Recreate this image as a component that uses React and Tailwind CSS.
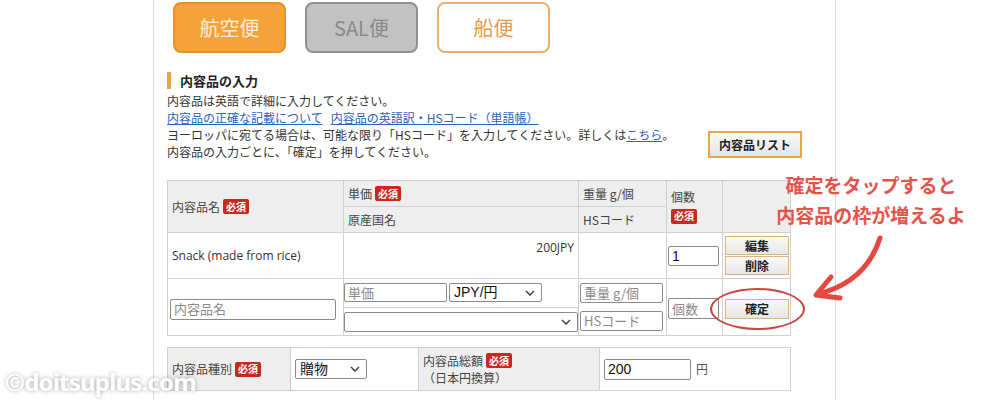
import React from 'react';

const JP = { fontFamily: '"Noto Sans CJK JP", "Noto Sans", sans-serif' };
const ARIAL = { fontFamily: '"Liberation Sans", "Noto Sans CJK JP", sans-serif' };
const OPEN = { fontFamily: '"Open Sans", "Noto Sans", sans-serif' };

const Badge = () => (
  <span className="inline-flex items-center justify-center bg-[#c8281e] text-white text-[10px] font-bold leading-none px-[3px] h-[15px] rounded-[2px] ml-[3px]">
    必須
  </span>
);

const Chevron = () => (
  <svg width="10" height="6" viewBox="0 0 10 6" className="shrink-0">
    <path d="M1 1 L5 5 L9 1" fill="none" stroke="#333" strokeWidth="1.3" />
  </svg>
);

const Field = ({ className = '', children, placeholder }) => (
  <div className={`flex items-center bg-white border border-[#8a8a8a] rounded-[2px] px-[3px] ${className}`}>
    {children ? (
      <span className="text-[14px] text-[#111]" style={ARIAL}>{children}</span>
    ) : (
      <span className="text-[13px] text-[#8a8a8a]">{placeholder}</span>
    )}
  </div>
);

const Select = ({ className = '', value }) => (
  <div className={`flex items-center justify-between bg-white border border-[#8a8a8a] rounded-[2px] pl-[4px] pr-[6px] ${className}`}>
    <span className="text-[14px] text-[#111]" style={ARIAL}>{value}</span>
    <Chevron />
  </div>
);

const SmallBtn = ({ label, className = '' }) => (
  <div className={`flex items-center justify-center bg-gradient-to-b from-[#fafafa] to-[#e6e6e6] border border-[#e2b27e] text-[12px] text-[#222] font-bold ${className}`}>
    {label}
  </div>
);

export default function App() {
  const th = 'bg-[#eeeeee] border border-[#cfcfcf] text-[12px] text-[#444] font-normal text-left align-middle px-[4px]';
  const cell = 'border border-[#cfcfcf] bg-white text-[12px] text-[#333]';

  return (
    <div className="relative w-[1000px] h-[400px] bg-white overflow-hidden" style={JP}>
      <div className="ml-[153px] w-[683px] h-full border-l border-r border-[#dcdcdc] pl-[13px]">
        {/* shipping method buttons */}
        <div className="flex gap-[19px] pl-[6px] pt-[2px]">
          <div className="w-[113px] h-[51px] rounded-[8px] bg-[#f6a23a] border-2 border-[#e8902a] flex items-center justify-center text-[20px] text-[#fdecd6]">
            航空便
          </div>
          <div className="w-[113px] h-[51px] rounded-[8px] bg-[#c2c2c2] border-2 border-[#8f8f8f] flex items-center justify-center text-[20px] text-[#8a8a8a]">
            SAL便
          </div>
          <div className="w-[113px] h-[51px] rounded-[8px] bg-white border-2 border-[#eab070] flex items-center justify-center text-[20px] text-[#e49a4c]">
            船便
          </div>
        </div>

        {/* heading */}
        <div className="flex items-center mt-[19px] h-[17px]">
          <div className="w-[4px] h-[17px] bg-[#f0a240]" />
          <span className="ml-[9px] text-[13px] font-bold text-[#222]">内容品の入力</span>
        </div>

        <div className="w-[635px] flex items-end justify-between text-[12px] leading-[17px] text-[#333] mt-[3px]">
          <div>
            <p>内容品は英語で詳細に入力してください。</p>
            <p>
              <span className="text-[#2a62b8] underline">内容品の正確な記載について</span>
              <span className="ml-[8px] text-[#2a62b8] underline">内容品の英語訳・HSコード（単語帳）</span>
            </p>
            <p>
              ヨーロッパに宛てる場合は、可能な限り「HSコード」を入力してください。詳しくは
              <span className="text-[#2a62b8] underline">こちら</span>。
            </p>
            <p>内容品の入力ごとに、「確定」を押してください。</p>
          </div>
          <div className="mb-[2px] w-[94px] h-[27px] border-2 border-[#eaa44c] bg-gradient-to-b from-[#fbfbfb] to-[#e4e4e4] flex items-center justify-center text-[12px] font-bold text-[#222]">
            内容品リスト
          </div>
        </div>

        {/* items table */}
        <table className="mt-[20px] border-collapse table-fixed w-[623px]">
          <colgroup>
            <col className="w-[176px]" />
            <col className="w-[235px]" />
            <col className="w-[88px]" />
            <col className="w-[56px]" />
            <col className="w-[68px]" />
          </colgroup>
          <tbody>
            <tr className="h-[26px]">
              <th rowSpan={2} className={th}>
                <span className="inline-flex items-center">内容品名<Badge /></span>
              </th>
              <th className={th}>
                <span className="inline-flex items-center">単価<Badge /></span>
              </th>
              <th className={th}>重量 g/個</th>
              <th rowSpan={2} className={th}>
                <div className="leading-[15px]">個数</div>
                <div className="mt-[2px] -ml-[3px]"><Badge /></div>
              </th>
              <th rowSpan={2} className={th} />
            </tr>
            <tr className="h-[26px]">
              <th className={th}>原産国名</th>
              <th className={th}>HSコード</th>
            </tr>
            <tr className="h-[46px]">
              <td className={`${cell} px-[4px] align-middle`}>
                <span style={OPEN}>Snack (made from rice)</span>
              </td>
              <td className={`${cell} px-[4px] align-top text-right pt-[5px]`}>
                <span style={OPEN}>200JPY</span>
              </td>
              <td className={cell} />
              <td className={`${cell} px-[1px] align-top`}>
                <Field className="w-[51px] h-[20px] mt-[13px]">1</Field>
              </td>
              <td className={`${cell} px-[2px] align-middle`}>
                <SmallBtn label="編集" className="w-[64px] h-[19px]" />
                <SmallBtn label="削除" className="w-[64px] h-[19px] mt-[1px]" />
              </td>
            </tr>
            <tr className="h-[57px]">
              <td className={`${cell} px-[2px] align-middle`}>
                <Field className="w-[166px] h-[21px] mt-[4px]" placeholder="内容品名" />
              </td>
              <td className={`${cell} p-0 align-top`}>
                <div className="flex gap-[2px] pt-[4px]">
                  <Field className="w-[103px] h-[19px]" placeholder="単価" />
                  <Select className="w-[93px] h-[19px]" value="JPY/円" />
                </div>
                <div className="border-t border-[#cfcfcf] mt-[5px]" />
                <Select className="w-[234px] h-[20px] mt-[4px]" value="" />
              </td>
              <td className={`${cell} px-[1px] align-top`}>
                <Field className="w-[83px] h-[20px] mt-[4px]" placeholder="重量 g/個" />
                <Field className="w-[83px] h-[20px] mt-[8px]" placeholder="HSコード" />
              </td>
              <td className={`${cell} px-[1px] align-middle`}>
                <Field className="w-[51px] h-[21px] mt-[3px]" placeholder="個数" />
              </td>
              <td className={`${cell} px-[2px] align-middle`}>
                <SmallBtn label="確定" className="w-[64px] h-[20px] mt-[3px]" />
              </td>
            </tr>
          </tbody>
        </table>

        {/* totals table */}
        <table className="mt-[11px] border-collapse table-fixed w-[623px]">
          <colgroup>
            <col className="w-[123px]" />
            <col className="w-[128px]" />
            <col className="w-[181px]" />
            <col className="w-[191px]" />
          </colgroup>
          <tbody>
            <tr className="h-[43px]">
              <th className={th}>
                <span className="inline-flex items-center">内容品種別<Badge /></span>
              </th>
              <td className={`${cell} px-[4px]`}>
                <Select className="w-[72px] h-[20px]" value="贈物" />
              </td>
              <th className={`${th} leading-[17px]`}>
                <span className="inline-flex items-center">内容品総額<Badge /></span>
                <div>（日本円換算）</div>
              </th>
              <td className={`${cell} px-[4px]`}>
                <div className="flex items-center gap-[5px]">
                  <Field className="w-[87px] h-[21px]">200</Field>
                  <span className="text-[12px] text-[#555]">円</span>
                </div>
              </td>
            </tr>
          </tbody>
        </table>
      </div>

      {/* annotation */}
      <div className="absolute left-[760px] top-[170px] w-[222px] text-center text-[19px] leading-[30px] font-bold text-[#e4544b]">
        <div>確定をタップすると</div>
        <div>内容品の枠が増えるよ</div>
      </div>
      <div className="absolute left-[710px] top-[288px] w-[95px] h-[42px] rounded-[50%] border-2 border-[#c8483f]" />
      <svg className="absolute left-0 top-0" width="1000" height="400" viewBox="0 0 1000 400">
        <path d="M880 238 Q 866 282 818 294" fill="none" stroke="#e4483f" strokeWidth="5" strokeLinecap="round" />
        <path d="M831 277 L816 295 L840 298" fill="none" stroke="#e4483f" strokeWidth="5" strokeLinecap="round" strokeLinejoin="round" />
      </svg>

      {/* watermark */}
      <div
        className="absolute left-[5px] top-[370px] text-[24px] leading-[24px] font-bold text-white tracking-[-0.8px] [text-shadow:0_0_4px_rgba(0,0,0,0.35)]"
        style={{ fontFamily: '"Noto Sans", sans-serif' }}
      >
        ©doitsuplus.com
      </div>
    </div>
  );
}
